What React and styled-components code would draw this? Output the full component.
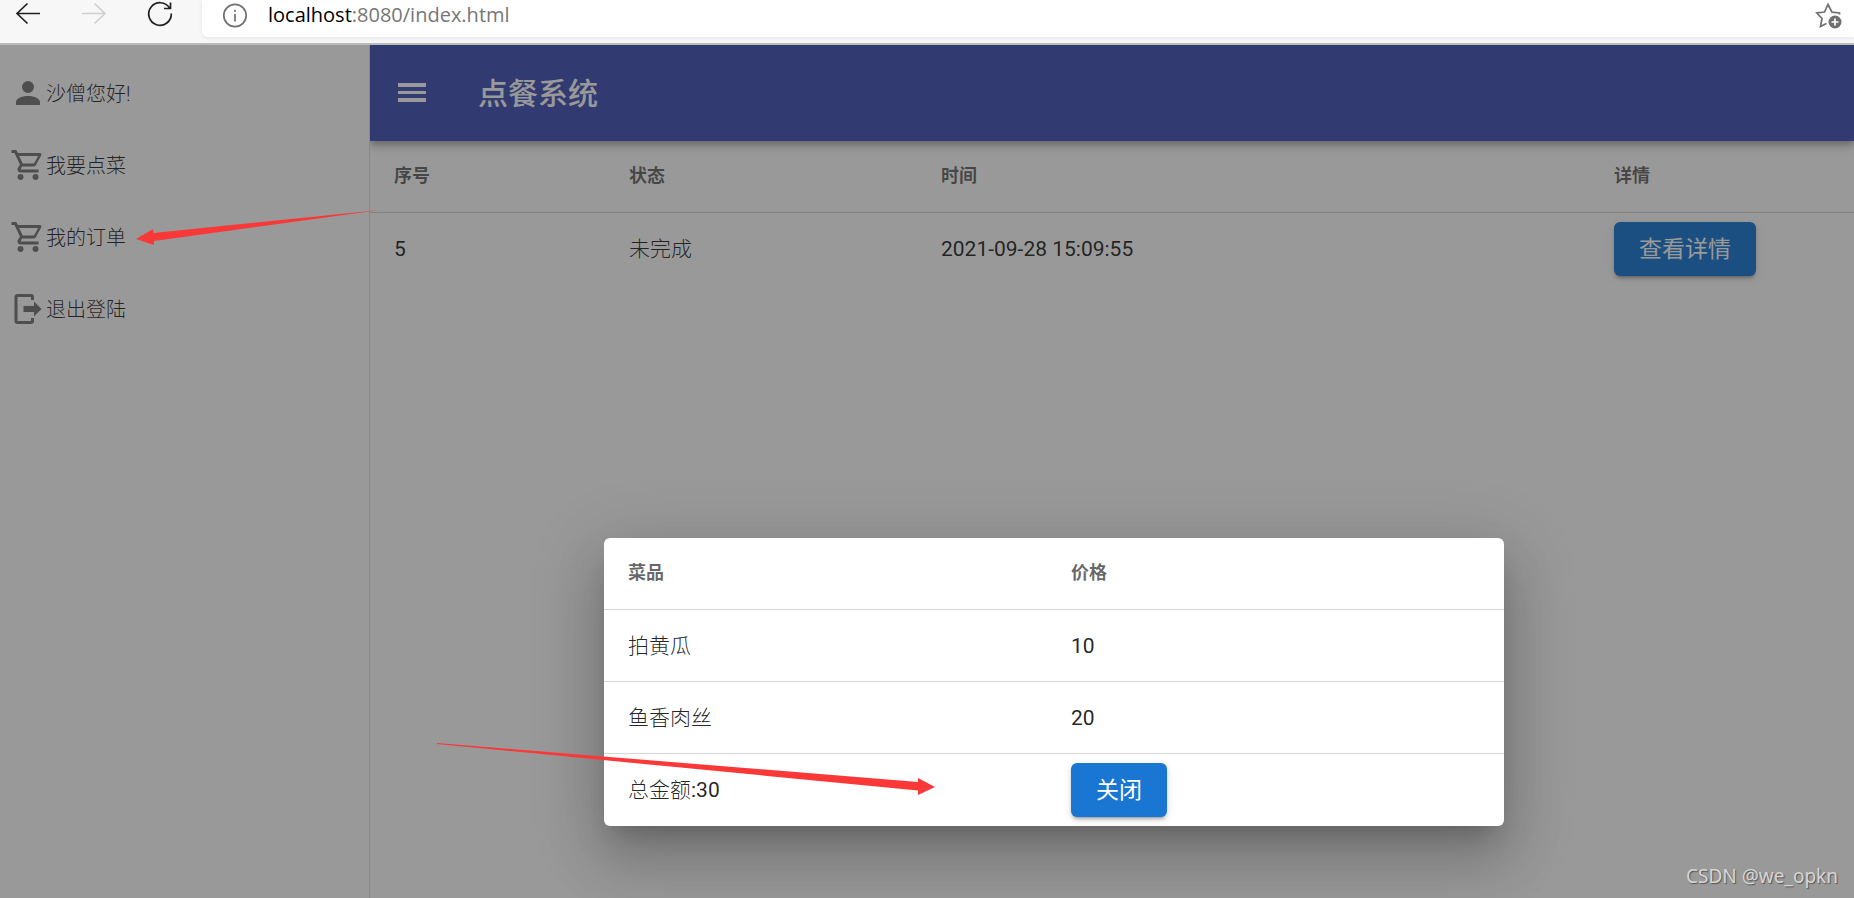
import { useState } from 'react';
import styled, { createGlobalStyle } from 'styled-components';

const ICONS = {
  account: 'M12,4A4,4 0 0,1 16,8A4,4 0 0,1 12,12A4,4 0 0,1 8,8A4,4 0 0,1 12,4M12,14C16.42,14 20,15.79 20,18V20H4V18C4,15.79 7.58,14 12,14Z',
  cart: 'M17,18A2,2 0 0,1 19,20A2,2 0 0,1 17,22C15.89,22 15,21.1 15,20C15,18.89 15.89,18 17,18M1,2H4.27L5.21,4H20A1,1 0 0,1 21,5C21,5.17 20.95,5.34 20.88,5.5L17.3,11.97C16.96,12.58 16.3,13 15.55,13H8.1L7.2,14.63L7.17,14.75A0.25,0.25 0 0,0 7.42,15H19V17H7C5.89,17 5,16.1 5,15C5,14.65 5.09,14.32 5.24,14.04L6.6,11.59L3,4H1V2M7,18A2,2 0 0,1 9,20A2,2 0 0,1 7,22C5.89,22 5,21.1 5,20C5,18.89 5.89,18 7,18M16,11L18.78,6H6.14L8.5,11H16Z',
  logout: 'M16,17V14H9V10H16V7L21,12L16,17M14,2A2,2 0 0,1 16,4V6H14V4H5V20H14V18H16V20A2,2 0 0,1 14,22H5A2,2 0 0,1 3,20V4A2,2 0 0,1 5,2H14Z',
  menu: 'M2.67,5.33H21.33V8H2.67V5.33M2.67,10.67H21.33V12.67H2.67V10.67M2.67,15.33H21.33V18H2.67V15.33Z',
};

const menuItems = [
  { icon: 'account', text: '沙僧您好!' },
  { icon: 'cart', text: '我要点菜' },
  { icon: 'cart', text: '我的订单' },
  { icon: 'logout', text: '退出登陆' },
];

const orders = [{ id: 5, state: '未完成', time: '2021-09-28 15:09:55' }];

const dishes = [
  { name: '拍黄瓜', price: 10 },
  { name: '鱼香肉丝', price: 20 },
];

function Icon({ name }) {
  return (
    <StyledIcon viewBox='0 0 24 24' aria-hidden='true'>
      <path d={ICONS[name]}/>
    </StyledIcon>
  );
}

function BrowserBar() {
  return (
    <StyledBrowserBar>
      <NavButtons>
        <NavButton aria-label='Back'>
          <LineIcon viewBox='0 0 28 28'>
            <path d='M26 13.500H3M13.500 3.500L3 13.500l10.500 10'/>
          </LineIcon>
        </NavButton>
        <NavButton aria-label='Forward' disabled>
          <LineIcon viewBox='0 0 28 28'>
            <path d='M2 13.500h23M14.500 3.500L25 13.500L14.500 23.500'/>
          </LineIcon>
        </NavButton>
        <NavButton aria-label='Refresh'>
          <LineIcon viewBox='0 0 28 28'>
            <path d='M23.700 8.200A11.300 11.300 0 1 0 25.300 13.500M24.500 2.500v6h-6.500'/>
          </LineIcon>
        </NavButton>
      </NavButtons>
      <Address>
        <LineIcon viewBox='0 0 28 28'>
          <circle cx='14' cy='14.500' r='11.200'/>
          <path d='M14 13v7.500M14 8.800v2'/>
        </LineIcon>
        <Url>localhost<span>:8080/index.html</span></Url>
        <NavButton aria-label='Add to favorites'>
          <LineIcon viewBox='0 0 28 28'>
            <path d='M24.500 13.500V12l-7.500-.8L13 3.500L9.500 11L1.800 12L7 17.500L5.500 25.500L11.500 22.500'/>
            <circle className='solid' cx='20' cy='21' r='6.500'/>
            <path className='plus' d='M20 17.500v7M16.500 21h7'/>
          </LineIcon>
        </NavButton>
      </Address>
    </StyledBrowserBar>
  );
}

function Sidebar() {
  return (
    <StyledSidebar>
      {menuItems.map((item) => (
        <SidebarLink href='#' key={item.text}>
          <Icon name={item.icon}/>
          <span>{item.text}</span>
        </SidebarLink>
      ))}
    </StyledSidebar>
  );
}

function Orders({ onDetail }) {
  return (
    <Table>
      <colgroup>
        <Col $width='235px'/>
        <Col $width='312px'/>
        <Col/>
        <Col $width='264px'/>
      </colgroup>
      <thead>
        <tr>
          <th>序号</th>
          <th>状态</th>
          <th>时间</th>
          <th>详情</th>
        </tr>
      </thead>
      <tbody>
        {orders.map((order) => (
          <tr key={order.id}>
            <td><Digits>{order.id}</Digits></td>
            <td>{order.state}</td>
            <td><Digits>{order.time}</Digits></td>
            <td><Button onClick={onDetail}>查看详情</Button></td>
          </tr>
        ))}
      </tbody>
    </Table>
  );
}

function OrderDialog({ onClose }) {
  const total = dishes.reduce((sum, dish) => sum + dish.price, 0);

  return (
    <Scrim>
      <Dialog role='dialog' aria-modal='true'>
        <Table>
          <colgroup>
            <Col $width='443px'/>
            <Col/>
          </colgroup>
          <thead>
            <tr>
              <th>菜品</th>
              <th>价格</th>
            </tr>
          </thead>
          <tbody>
            {dishes.map((dish) => (
              <tr key={dish.name}>
                <td>{dish.name}</td>
                <td><Digits>{dish.price}</Digits></td>
              </tr>
            ))}
            <tr>
              <td>总金额<Digits>:{total}</Digits></td>
              <td><Button onClick={onClose}>关闭</Button></td>
            </tr>
          </tbody>
        </Table>
      </Dialog>
    </Scrim>
  );
}

function App() {
  const [open, setOpen] = useState(true);

  return (
    <Window>
      <GlobalStyle/>
      <BrowserBar/>
      <Page>
        <Sidebar/>
        <Main>
          <AppBar>
            <MenuButton aria-label='Menu'><Icon name='menu'/></MenuButton>
            <Title>点餐系统</Title>
          </AppBar>
          <Orders onDetail={() => setOpen(true)}/>
        </Main>
        {open && <OrderDialog onClose={() => setOpen(false)}/>}
        <Arrow className='orders' viewBox='0 0 244 36' aria-hidden='true'>
          <path d='M0 29L17 19L17.500 23L244 0L18 31L18 35Z'/>
        </Arrow>
        <Arrow className='total' viewBox='0 0 498 52' aria-hidden='true'>
          <path d='M0 0L481 39L481 35L498 44L481 52L481 47.500L0 1Z'/>
        </Arrow>
        <Watermark>CSDN @we_opkn</Watermark>
      </Page>
    </Window>
  );
}

export default App;

const GlobalStyle = createGlobalStyle`
  * {
    box-sizing: border-box;
  }

  body {
    margin: 0;
    font-family: Roboto, 'Noto Sans CJK SC', sans-serif;
    color: rgba(0, 0, 0, 0.87);
  }

  button {
    border: none;
    padding: 0;
    background: none;
    font-family: inherit;
    color: inherit;
  }
`;

const Window = styled.div`
  min-height: 100vh;
  display: flex;
  flex-direction: column;
`;

const StyledBrowserBar = styled.header`
  height: 45px;
  display: flex;
  align-items: flex-start;
  background-color: #f7f7f7;
  border-bottom: 2px solid #babcb9;
`;

const NavButtons = styled.div`
  width: 202px;
  padding-left: 14px;
  display: flex;
  gap: 38px;
`;

const NavButton = styled.button`
  height: 28px;
  display: block;

  &:disabled {
    color: #d0d0d0;
  }
`;

const LineIcon = styled.svg`
  width: 28px;
  height: 28px;
  display: block;
  fill: none;
  stroke: currentColor;
  stroke-width: 1.7;

  .solid {
    fill: currentColor;
    stroke: none;
  }

  .plus {
    stroke: white;
  }
`;

const Address = styled.div`
  flex: 1;
  height: 37px;
  padding: 0 11px 8px 19px;
  display: flex;
  align-items: center;
  background-color: white;
  border-bottom-left-radius: 6px;
  box-shadow: 0 1px 4px rgba(0, 0, 0, 0.08);
  color: #707070;
`;

const Url = styled.div`
  flex: 1;
  margin-left: 19px;
  font: 20px/28px 'Open Sans', sans-serif;
  color: black;

  span {
    color: #767676;
  }
`;

const Page = styled.div`
  flex: 1;
  display: flex;
  position: relative;
  overflow: hidden;
`;

const StyledSidebar = styled.nav`
  width: 370px;
  padding-top: 12px;
  background-color: white;
  border-right: 1px solid rgba(0, 0, 0, 0.12);
  z-index: 1;
`;

const SidebarLink = styled.a`
  height: 72px;
  padding-left: 10px;
  display: flex;
  align-items: center;
  font-size: 20px;
  font-weight: 300;
  line-height: 24px;
  color: inherit;
  text-decoration: none;

  svg {
    color: rgba(0, 0, 0, 0.54);
  }

  span {
    padding-top: 2px;
  }
`;

const StyledIcon = styled.svg`
  width: 36px;
  height: 36px;
  display: block;
  fill: currentColor;
`;

const Main = styled.main`
  flex: 1;
`;

const AppBar = styled.div`
  height: 96px;
  padding: 0 24px;
  display: flex;
  align-items: center;
  gap: 48px;
  background-color: #3f51b5;
  color: white;
  box-shadow: 0 3px 6px -1px rgba(0, 0, 0, 0.2), 0 6px 8px rgba(0, 0, 0, 0.14), 0 2px 15px rgba(0, 0, 0, 0.12);
`;

const MenuButton = styled.button`
  display: block;
`;

const Title = styled.h1`
  margin: 0;
  padding-top: 2px;
  font-size: 30px;
  font-weight: 500;
  line-height: 36px;
`;

const Table = styled.table`
  width: 100%;
  table-layout: fixed;
  border-spacing: 0;

  th, td {
    height: 72px;
    padding: 0 24px;
    line-height: 24px;
    text-align: left;
    border-bottom: 1px solid rgba(0, 0, 0, 0.16);
  }

  th {
    padding-bottom: 2px;
    font-size: 18px;
    font-weight: 700;
    color: rgba(0, 0, 0, 0.6);
  }

  td {
    font-size: 21px;
    font-weight: 300;
  }

  tbody tr:last-child td {
    border-bottom: none;
  }
`;

const Col = styled.col`
  width: ${(props) => props.$width || 'auto'};
`;

const Digits = styled.span`
  font-weight: 400;
`;

const Button = styled.button`
  height: 54px;
  padding: 2px 25px 0;
  display: block;
  background-color: #1976d2;
  border-radius: 6px;
  font-size: 23px;
  line-height: 24px;
  color: white;
  white-space: nowrap;
  box-shadow: 0 4px 2px -3px rgba(0, 0, 0, 0.2), 0 3px 3px rgba(0, 0, 0, 0.14), 0 2px 8px rgba(0, 0, 0, 0.12);
`;

const Scrim = styled.div`
  position: absolute;
  inset: 0;
  z-index: 2;
  padding: 0 350px 72px 604px;
  display: flex;
  align-items: flex-end;
  background-color: rgba(33, 33, 33, 0.46);
`;

const Dialog = styled.div`
  flex: 1;
  background-color: white;
  border-radius: 6px;
  box-shadow: 0 16px 22px -10px rgba(0, 0, 0, 0.2), 0 36px 57px 4px rgba(0, 0, 0, 0.14), 0 14px 69px 12px rgba(0, 0, 0, 0.12);
`;

const Arrow = styled.svg`
  position: absolute;
  z-index: 3;
  fill: #fb3838;
  pointer-events: none;

  &.orders {
    width: 244px;
    left: 136px;
    top: 165px;
  }

  &.total {
    width: 498px;
    left: 437px;
    top: 698px;
  }
`;

const Watermark = styled.div`
  position: absolute;
  right: 16px;
  bottom: 8px;
  z-index: 3;
  font: 19px/28px 'Noto Sans', sans-serif;
  color: #d6d6d6;
  text-shadow: 1px 1px 1px #555555;
`;
